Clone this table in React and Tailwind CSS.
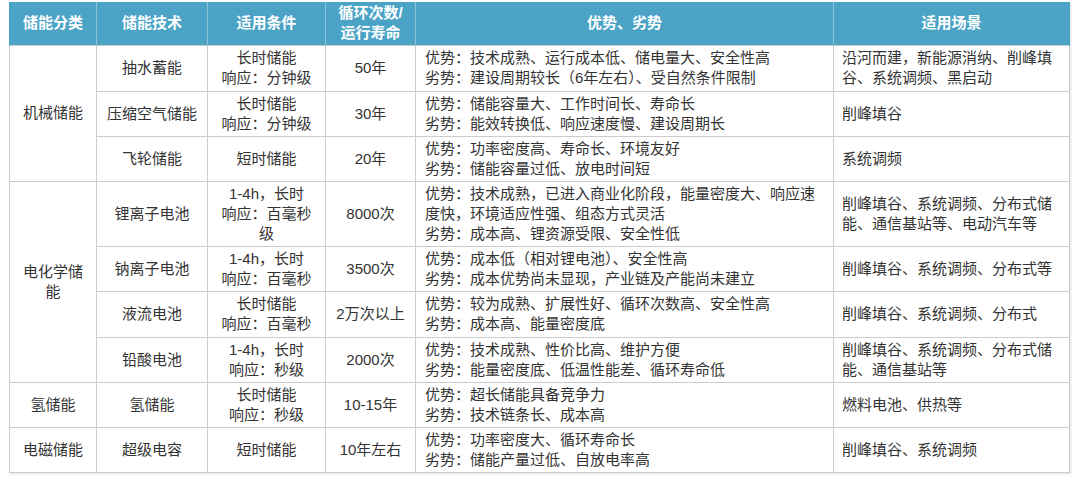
import React from "react"

// 储能技术对比表
const rows = [
  { cat: "机械储能", span: 3, tech: "抽水蓄能", cond: ["长时储能", "响应：分钟级"], life: "50年",
    pros: ["优势：技术成熟、运行成本低、储电量大、安全性高", "劣势：建设周期较长（6年左右）、受自然条件限制"],
    scene: ["沿河而建，新能源消纳、削峰填", "谷、系统调频、黑启动"], h: "h-[46px]" },
  { tech: "压缩空气储能", cond: ["长时储能", "响应：分钟级"], life: "30年",
    pros: ["优势：储能容量大、工作时间长、寿命长", "劣势：能效转换低、响应速度慢、建设周期长"],
    scene: ["削峰填谷"], h: "h-[45px]" },
  { tech: "飞轮储能", cond: ["短时储能"], life: "20年",
    pros: ["优势：功率密度高、寿命长、环境友好", "劣势：储能容量过低、放电时间短"],
    scene: ["系统调频"], h: "h-[45px]" },
  { cat: "电化学储能", catLines: ["电化学储", "能"], span: 4, tech: "锂离子电池", cond: ["1-4h，长时", "响应：百毫秒", "级"], life: "8000次",
    pros: ["优势：技术成熟，已进入商业化阶段，能量密度大、响应速", "度快，环境适应性强、组态方式灵活", "劣势：成本高、锂资源受限、安全性低"],
    scene: ["削峰填谷、系统调频、分布式储", "能、通信基站等、电动汽车等"], h: "h-[64px]" },
  { tech: "钠离子电池", cond: ["1-4h，长时", "响应：百毫秒"], life: "3500次",
    pros: ["优势：成本低（相对锂电池）、安全性高", "劣势：成本优势尚未显现，产业链及产能尚未建立"],
    scene: ["削峰填谷、系统调频、分布式等"], h: "h-[45px]" },
  { tech: "液流电池", cond: ["长时储能", "响应：百毫秒"], life: "2万次以上",
    pros: ["优势：较为成熟、扩展性好、循环次数高、安全性高", "劣势：成本高、能量密度底"],
    scene: ["削峰填谷、系统调频、分布式"], h: "h-[46px]" },
  { tech: "铅酸电池", cond: ["1-4h，长时", "响应：秒级"], life: "2000次",
    pros: ["优势：技术成熟、性价比高、维护方便", "劣势：能量密度底、低温性能差、循环寿命低"],
    scene: ["削峰填谷、系统调频、分布式储", "能、通信基站等"], h: "h-[45px]" },
  { cat: "氢储能", span: 1, tech: "氢储能", cond: ["长时储能", "响应：秒级"], life: "10-15年",
    pros: ["优势：超长储能具备竞争力", "劣势：技术链条长、成本高"],
    scene: ["燃料电池、供热等"], h: "h-[45px]" },
  { cat: "电磁储能", span: 1, tech: "超级电容", cond: ["短时储能"], life: "10年左右",
    pros: ["优势：功率密度大、循环寿命长", "劣势：储能产量过低、自放电率高"],
    scene: ["削峰填谷、系统调频"], h: "h-[45px]" },
]

const Lines = ({ items }) => items.map((t, i) => <div key={i} className="whitespace-nowrap">{t}</div>)

const th = "border-x border-[#8fc4da] font-bold text-white text-center align-middle px-1"
const td = "border border-[#cdcdcd] align-middle py-0.5"

export default function App() {
  return (
    <div className="w-[1080px] h-[480px] bg-white pl-[9px] pt-[2px] text-[15px] leading-5 text-[#333333]"
      style={{ fontFamily: '"Liberation Sans", "Noto Sans CJK SC", sans-serif' }}>
      <table className="table-fixed border-collapse w-[1060px] shadow-[1px_1px_2px_rgba(0,0,0,0.12)]">
        <thead>
          <tr className="h-[43px] bg-[#4ba4c6]">
            <th className={`${th} w-[87px] border-l-[#4ba4c6]`}>储能分类</th>
            <th className={`${th} w-[111px]`}>储能技术</th>
            <th className={`${th} w-[118px]`}>适用条件</th>
            <th className={`${th} w-[90px]`}>循环次数/<br />运行寿命</th>
            <th className={`${th} w-[418px]`}>优势、劣势</th>
            <th className={`${th} w-[236px] border-r-[#4ba4c6]`}>适用场景</th>
          </tr>
        </thead>
        <tbody>
          {rows.map((r, i) => (
            <tr key={i} className={r.h}>
              {r.cat && (
                <td rowSpan={r.span} className={`${td} text-center px-1`}>
                  {r.catLines ? <Lines items={r.catLines} /> : r.cat}
                </td>
              )}
              <td className={`${td} text-center px-1`}>{r.tech}</td>
              <td className={`${td} text-center px-1`}><Lines items={r.cond} /></td>
              <td className={`${td} text-center px-1`}>{r.life}</td>
              <td className={`${td} pl-[9px] pr-1`}><Lines items={r.pros} /></td>
              <td className={`${td} pl-[8px] pr-1`}><Lines items={r.scene} /></td>
            </tr>
          ))}
        </tbody>
      </table>
    </div>
  )
}
